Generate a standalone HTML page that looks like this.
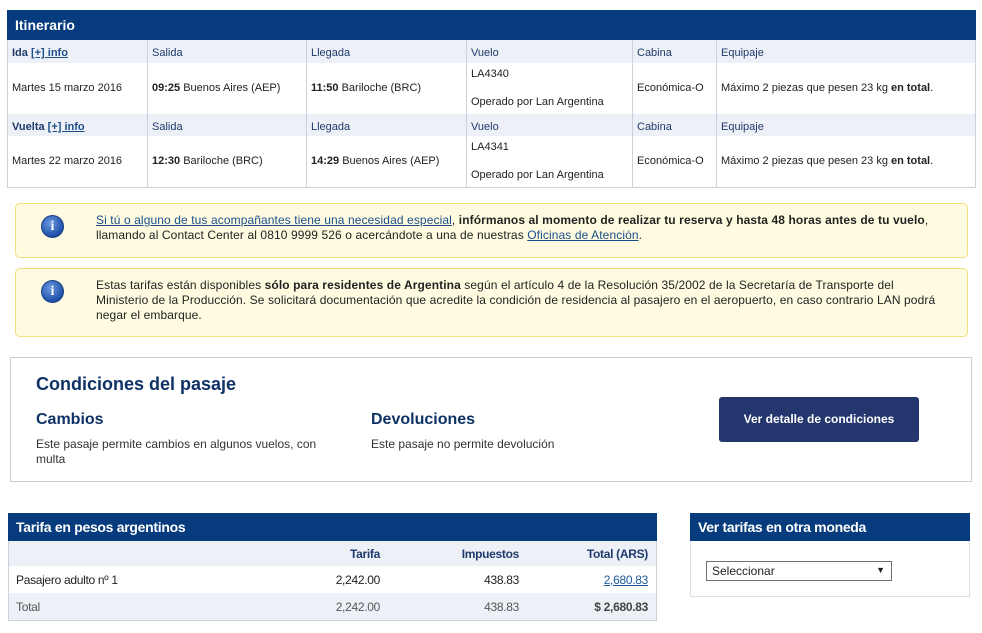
<!DOCTYPE html>
<html><head><meta charset="utf-8"><style>
*{margin:0;padding:0;box-sizing:border-box}
body{width:982px;height:633px;background:#fff;font-family:"Liberation Sans",Arial,sans-serif;font-size:11px;color:#222;position:relative;overflow:hidden}
.a{position:absolute}
.hd{background:#063c7d;color:#fff;font-weight:bold}
.lb{background:#eef0f7}
.c{color:#1e3a6c}
a{color:#1a4f8a;text-decoration:underline}
b{color:#222}
.vl{position:absolute;top:40px;height:147px;width:1px;background:#ccd0da}
.box{position:absolute;background:#fffbe1;border:1px solid #efe07a;border-radius:5px}
.ic{position:absolute;width:23px;height:23px;border-radius:50%;background:radial-gradient(circle at 40% 35%,#6c9ae0,#1d4fa8 70%);border:1px solid #1a3f85;color:#fff;font:bold 14px "Liberation Serif",serif;text-align:center;line-height:21px}
.nt{position:absolute;left:96px;width:870px;font-size:12px;letter-spacing:.1px;line-height:15px;white-space:nowrap}
.n{letter-spacing:-.3px}
.r{text-align:right}
</style></head><body>
<div class="a hd" style="left:7px;top:10px;width:969px;height:30px;font-size:14px;padding:7px 0 0 8px">Itinerario</div>
<div class="a" style="left:7px;top:40px;width:969px;height:148px;border:1px solid #ccd0da;border-top:0"></div>
<div class="a lb" style="left:8px;top:40px;width:967px;height:23px"></div>
<div class="a lb" style="left:8px;top:114px;width:967px;height:22px"></div>
<div class="vl" style="left:147px"></div><div class="vl" style="left:306px"></div><div class="vl" style="left:466px"></div><div class="vl" style="left:632px"></div><div class="vl" style="left:716px"></div>

<div class="a c" style="left:12px;top:47px"><b style="color:#1e3a6c">Ida</b> <a style="font-weight:bold">[+] info</a></div>
<div class="a c" style="left:152px;top:47px">Salida</div><div class="a c" style="left:311px;top:47px">Llegada</div><div class="a c" style="left:471px;top:47px">Vuelo</div><div class="a c" style="left:637px;top:47px">Cabina</div><div class="a c" style="left:721px;top:47px">Equipaje</div>
<div class="a" style="left:12px;top:82px">Martes 15 marzo 2016</div>
<div class="a" style="left:152px;top:82px"><b>09:25</b> Buenos Aires (AEP)</div>
<div class="a" style="left:311px;top:82px"><b>11:50</b> Bariloche (BRC)</div>
<div class="a" style="left:471px;top:68px">LA4340</div>
<div class="a" style="left:471px;top:96px">Operado por Lan Argentina</div>
<div class="a" style="left:637px;top:82px">Económica-O</div>
<div class="a" style="left:721px;top:82px">Máximo 2 piezas que pesen 23 kg <b>en total</b>.</div>

<div class="a c" style="left:12px;top:121px"><b style="color:#1e3a6c">Vuelta</b> <a style="font-weight:bold">[+] info</a></div>
<div class="a c" style="left:152px;top:121px">Salida</div><div class="a c" style="left:311px;top:121px">Llegada</div><div class="a c" style="left:471px;top:121px">Vuelo</div><div class="a c" style="left:637px;top:121px">Cabina</div><div class="a c" style="left:721px;top:121px">Equipaje</div>
<div class="a" style="left:12px;top:155px">Martes 22 marzo 2016</div>
<div class="a" style="left:152px;top:155px"><b>12:30</b> Bariloche (BRC)</div>
<div class="a" style="left:311px;top:155px"><b>14:29</b> Buenos Aires (AEP)</div>
<div class="a" style="left:471px;top:141px">LA4341</div>
<div class="a" style="left:471px;top:169px">Operado por Lan Argentina</div>
<div class="a" style="left:637px;top:155px">Económica-O</div>
<div class="a" style="left:721px;top:155px">Máximo 2 piezas que pesen 23 kg <b>en total</b>.</div>

<div class="box" style="left:15px;top:203px;width:953px;height:55px"></div>
<div class="ic" style="left:41px;top:215px">i</div>
<div class="nt" style="top:213px"><a>Si tú o alguno de tus acompañantes tiene una necesidad especial</a>, <b>infórmanos al momento de realizar tu reserva y hasta 48 horas antes de tu vuelo</b>,<br>llamando al Contact Center al 0810 9999 526 o acercándote a una de nuestras <a>Oficinas de Atención</a>.</div>

<div class="box" style="left:15px;top:268px;width:953px;height:69px"></div>
<div class="ic" style="left:41px;top:280px">i</div>
<div class="nt" style="top:278px">Estas tarifas están disponibles <b>sólo para residentes de Argentina</b> según el artículo 4 de la Resolución 35/2002 de la Secretaría de Transporte del<br>Ministerio de la Producción. Se solicitará documentación que acredite la condición de residencia al pasajero en el aeropuerto, en caso contrario LAN podrá<br>negar el embarque.</div>

<div class="a" style="left:10px;top:357px;width:962px;height:125px;border:1px solid #ccc"></div>
<div class="a" style="left:36px;top:374px;font-size:18px;font-weight:bold;color:#0e3266">Condiciones del pasaje</div>
<div class="a" style="left:36px;top:411px;font-size:16px;font-weight:bold;color:#0e3266">Cambios</div>
<div class="a" style="left:371px;top:411px;font-size:16px;font-weight:bold;color:#0e3266">Devoluciones</div>
<div class="a" style="left:36px;top:437px;width:300px;font-size:12px;line-height:15px;color:#333">Este pasaje permite cambios en algunos vuelos, con multa</div>
<div class="a" style="left:371px;top:437px;font-size:12px;color:#333">Este pasaje no permite devolución</div>
<div class="a" style="left:719px;top:397px;width:200px;height:45px;background:#23366d;border-radius:3px;color:#fff;font-weight:bold;font-size:12px;text-align:center;line-height:45px">Ver detalle de condiciones</div>

<div class="a hd n" style="left:8px;top:513px;width:649px;height:28px;font-size:14px;padding:6px 0 0 8px">Tarifa en pesos argentinos</div>
<div class="a" style="left:8px;top:541px;width:649px;height:80px;border:1px solid #ccd0da;border-top:0"></div>
<div class="a lb" style="left:9px;top:541px;width:647px;height:25px"></div>
<div class="a lb" style="left:9px;top:593px;width:647px;height:27px"></div>
<div class="a n r c" style="left:280px;top:547px;width:100px;font-size:12px;font-weight:bold">Tarifa</div>
<div class="a n r c" style="left:419px;top:547px;width:100px;font-size:12px;font-weight:bold">Impuestos</div>
<div class="a n r c" style="left:548px;top:547px;width:100px;font-size:12px;font-weight:bold">Total (ARS)</div>
<div class="a n" style="left:16px;top:573px;font-size:12px">Pasajero adulto nº 1</div>
<div class="a n r" style="left:280px;top:573px;width:100px;font-size:12px">2,242.00</div>
<div class="a n r" style="left:419px;top:573px;width:100px;font-size:12px">438.83</div>
<div class="a n r" style="left:548px;top:573px;width:100px;font-size:12px"><a style="color:#1a5a9a">2,680.83</a></div>
<div class="a n" style="left:16px;top:600px;font-size:12px;color:#555">Total</div>
<div class="a n r" style="left:280px;top:600px;width:100px;font-size:12px;color:#555">2,242.00</div>
<div class="a n r" style="left:419px;top:600px;width:100px;font-size:12px;color:#555">438.83</div>
<div class="a n r" style="left:548px;top:600px;width:100px;font-size:12px;font-weight:bold;color:#444">$ 2,680.83</div>

<div class="a hd n" style="left:690px;top:513px;width:280px;height:28px;font-size:14px;padding:6px 0 0 8px">Ver tarifas en otra moneda</div>
<div class="a" style="left:690px;top:541px;width:280px;height:56px;border:1px solid #dde0e6;border-top:0"></div>
<div class="a" style="left:706px;top:561px;width:186px;height:20px;border:1px solid #6b7377;font-size:12px;padding:2px 0 0 5px">Seleccionar<span style="position:absolute;right:6px;top:3px;font-size:9px">▼</span></div>
</body></html>
